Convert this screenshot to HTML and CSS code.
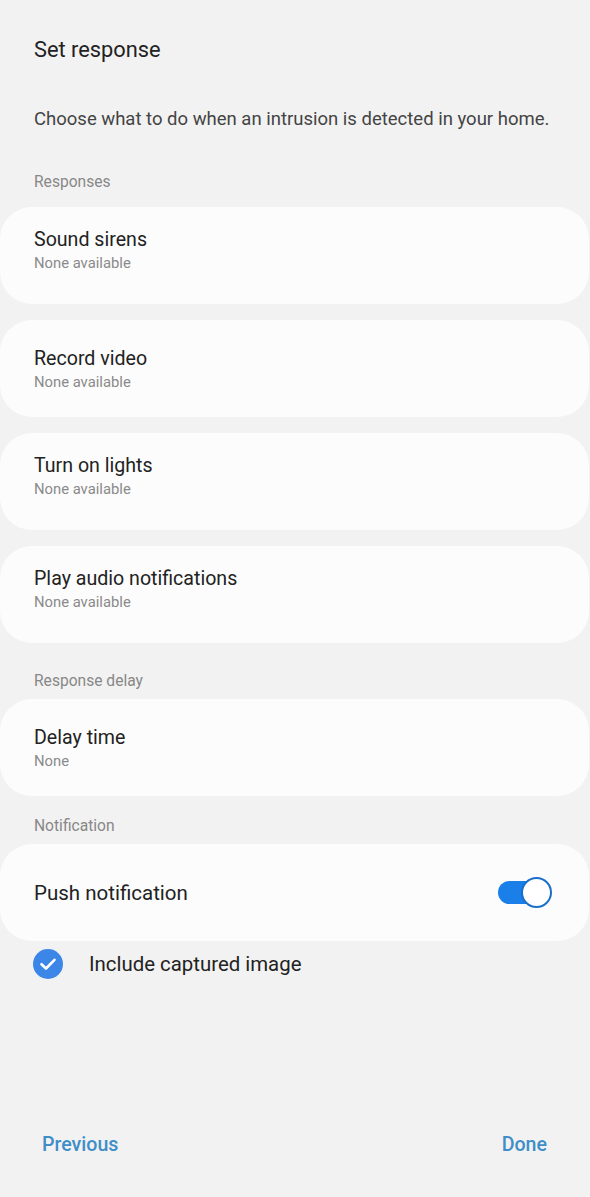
FILE: index.html
```html
<!DOCTYPE html>
<html>
<head>
<meta charset="utf-8">
<link rel="stylesheet" href="styles.css">
</head>
<body>
<div class="page">
  <h1 class="title">Set response</h1>
  <p class="desc">Choose what to do when an intrusion is detected in your home.</p>

  <div class="section">Responses</div>
  <div class="cards">
    <div class="card"><div class="c-title">Sound sirens</div><div class="c-sub">None available</div></div>
    <div class="card low"><div class="c-title">Record video</div><div class="c-sub">None available</div></div>
    <div class="card"><div class="c-title">Turn on lights</div><div class="c-sub">None available</div></div>
    <div class="card"><div class="c-title">Play audio notifications</div><div class="c-sub">None available</div></div>
  </div>

  <div class="section s2">Response delay</div>
  <div class="card single low"><div class="c-title">Delay time</div><div class="c-sub">None</div></div>

  <div class="section s3">Notification</div>
  <div class="card single row">
    <div class="c-title push">Push notification</div>
    <div class="toggle"><span class="thumb"></span></div>
  </div>

  <div class="check-row">
    <svg class="check" width="30" height="30" viewBox="0 0 30 30">
      <circle cx="15" cy="15" r="15" fill="#3b86e6"/>
      <path d="M8.5 15.2 L13 19.5 L21.5 10.8" fill="none" stroke="#fff" stroke-width="2.6" stroke-linecap="round" stroke-linejoin="round"/>
    </svg>
    <span class="check-label">Include captured image</span>
  </div>

  <div class="spacer"></div>
  <div class="footer">
    <span class="btn">Previous</span>
    <span class="btn">Done</span>
  </div>
</div>
</body>
</html>
```
FILE: styles.css
```css
html, body {
  margin: 0;
  padding: 0;
  background: #f2f2f2;
}
body {
  font-family: Roboto, "Noto Sans", sans-serif;
  color: #222;
}
.page {
  width: 590px;
  height: 1197px;
  display: flex;
  flex-direction: column;
  box-sizing: border-box;
}
.title {
  margin: 36px 0 0 34px;
  font-size: 21.8px;
  font-weight: 400;
  line-height: 28px;
  color: #222;
}
.desc {
  margin: 43px 0 0 34px;
  font-size: 18.5px;
  line-height: 24px;
  color: #444;
  white-space: nowrap;
}
.section {
  margin: 41px 0 0 34px;
  font-size: 15.6px;
  line-height: 20px;
  color: #888;
}
.section.s2 { margin-top: 28px; }
.section.s3 { margin-top: 20px; }
.cards {
  display: flex;
  flex-direction: column;
  gap: 16px;
  margin-top: 15px;
}
.card.single { margin-top: 8px; }
.card {
  width: 589px;
  height: 97px;
  box-sizing: border-box;
  background: #fcfcfc;
  border-radius: 32px;
  padding: 20px 34px 0;
}
.card.low { padding-top: 26px; }
.c-title {
  font-size: 19.6px;
  line-height: 26px;
  color: #222;
}
.c-title.push { font-size: 20.5px; }
.c-sub {
  margin-top: 1px;
  font-size: 14.8px;
  line-height: 18px;
  color: #8a8a8a;
}
.card.row {
  display: flex;
  align-items: center;
  justify-content: space-between;
  padding: 0 37px 0 34px;
}
.toggle {
  position: relative;
  width: 54px;
  height: 31px;
}
.toggle::before {
  content: "";
  position: absolute;
  left: 0;
  top: 4px;
  width: 46px;
  height: 23px;
  border-radius: 12px;
  background: #1a7fe8;
}
.thumb {
  position: absolute;
  right: 0;
  top: 0;
  width: 27px;
  height: 27px;
  border-radius: 50%;
  background: #fff;
  border: 2px solid #1a6fc8;
}
.check-row {
  display: flex;
  align-items: center;
  margin: 8px 0 0 33px;
  height: 30px;
}
.check-label {
  margin-left: 26px;
  font-size: 20.4px;
  color: #222;
}
.spacer { flex: 1; }
.footer {
  display: flex;
  justify-content: space-between;
  padding: 0 43px 40px 42px;
}
.btn {
  font-size: 19.6px;
  font-weight: 500;
  color: #3f8ec8;
  line-height: 24px;
}
```
